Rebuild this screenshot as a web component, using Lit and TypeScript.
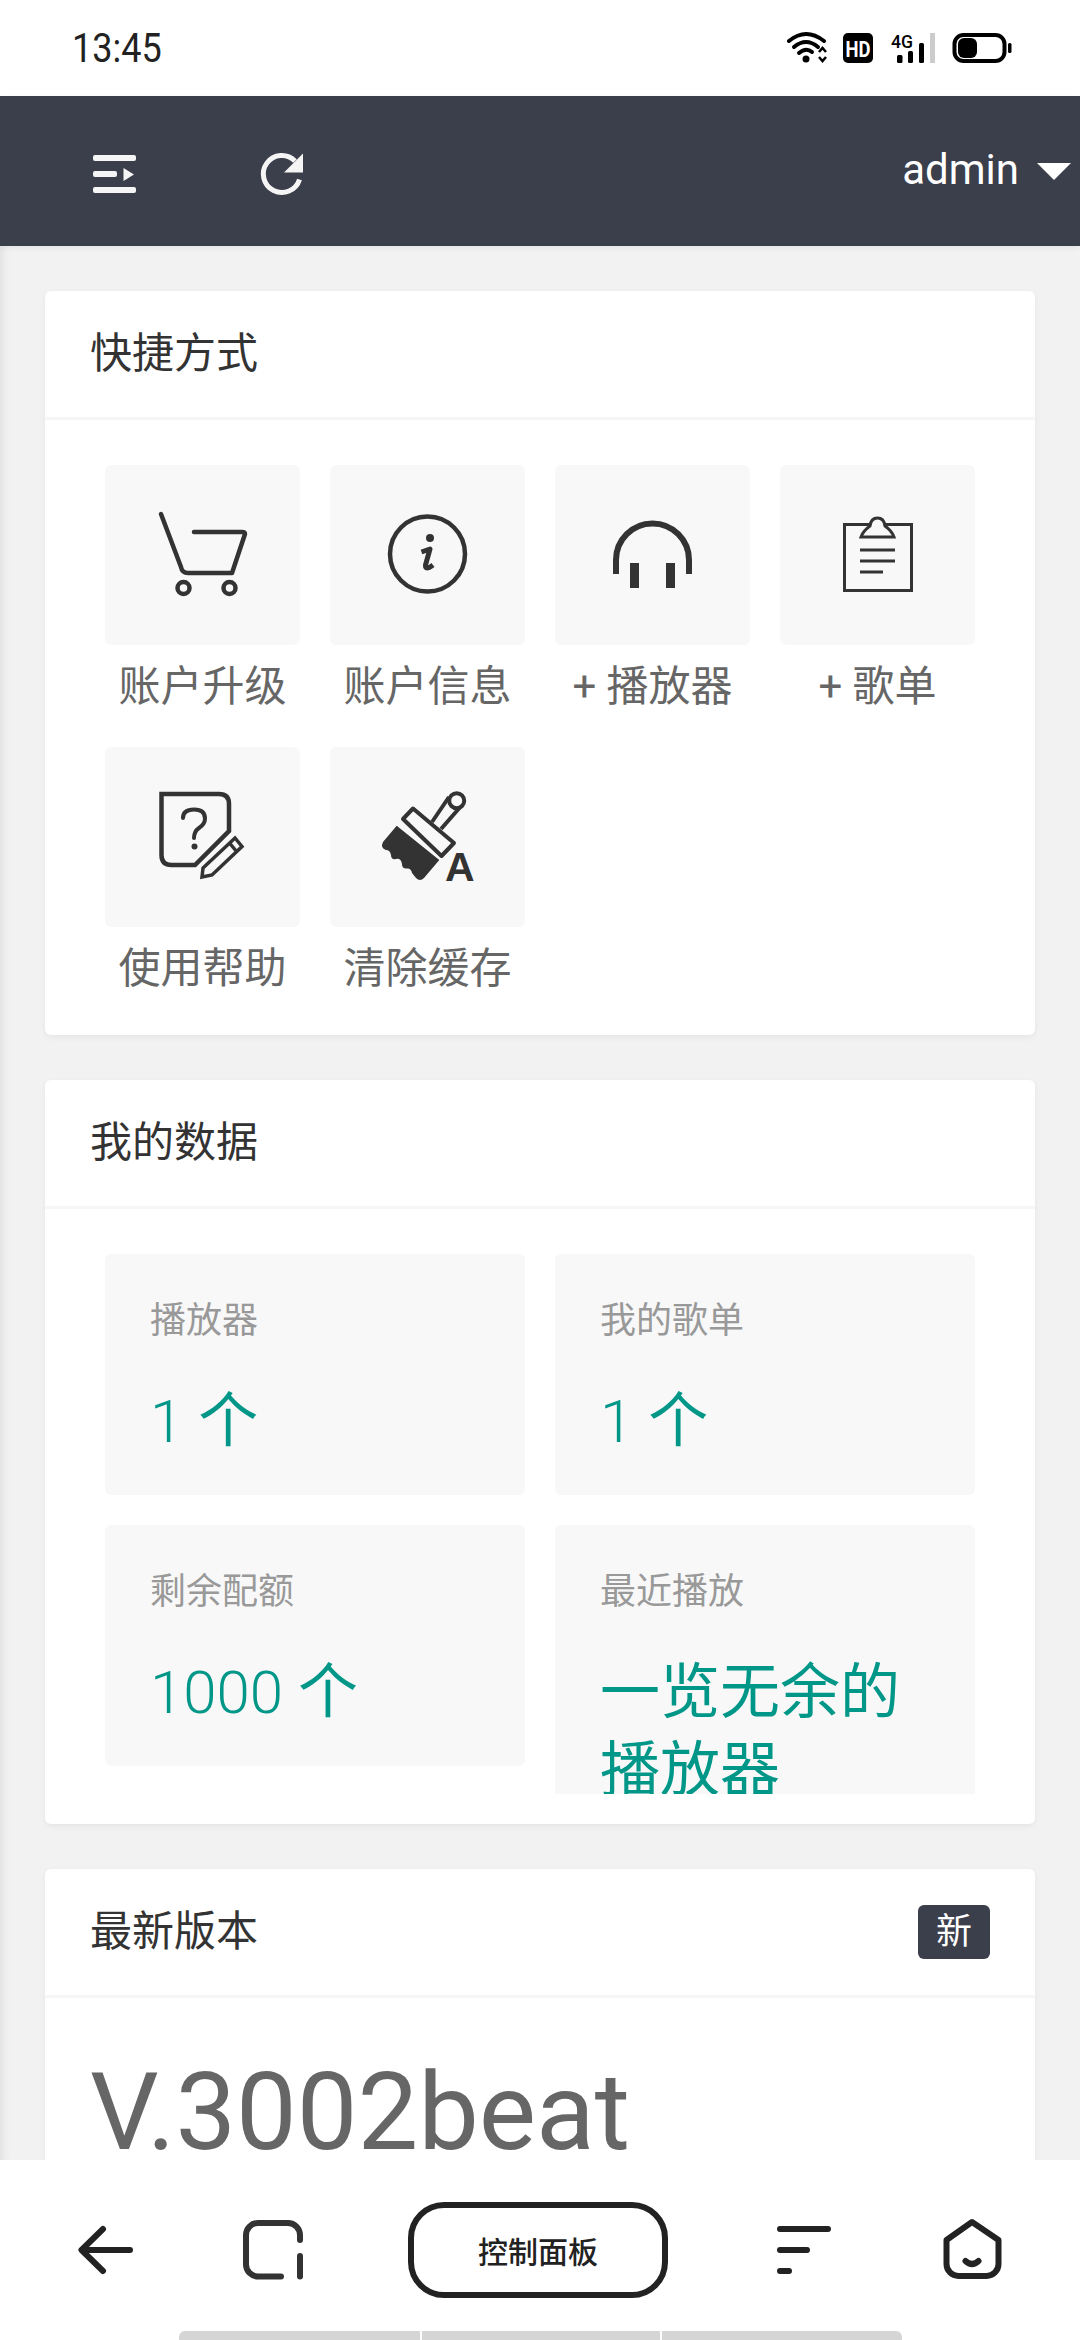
import { LitElement, html, css, svg } from "lit";
import { customElement } from "lit/decorators.js";

const INK = "#333";

const cart = svg`<g fill="none" stroke="${INK}" stroke-width="4.5" stroke-linecap="round" stroke-linejoin="round">
  <path d="M161 514 L181 567 Q182 573 188 573 L232 573 L245 534 Q245 532 242 532 L194 532"/>
  <circle cx="183.5" cy="588" r="6"/><circle cx="229.5" cy="588" r="6"/></g>`;
const info = svg`<circle cx="427.5" cy="554" r="37.5" fill="none" stroke="${INK}" stroke-width="4.5"/>
  <circle cx="430" cy="538" r="4" fill="${INK}"/>
  <path d="M421.5 552 L430 549 L425.5 565 Q425 571 433 565" fill="none" stroke="${INK}" stroke-width="5" stroke-linejoin="round"/>`;
const phones = svg`<path d="M616 574 V560 A36.5 36.5 0 0 1 689 560 V574" fill="none" stroke="${INK}" stroke-width="6"/>
  <rect x="630" y="563" width="9" height="25" fill="${INK}"/><rect x="666" y="563" width="9" height="25" fill="${INK}"/>`;
const clip = svg`<g fill="none" stroke="${INK}" stroke-width="3">
  <rect x="844.5" y="524.5" width="67" height="66"/>
  <path d="M861 537 Q863 531 870 526 Q871 518 877.5 518 Q884 518 885 526 Q892 531 894 537 Z" fill="#f8f8f8"/>
  <path d="M860 550 H895 M860 561 H895 M860 572 H883"/></g>`;
const help = svg`<g fill="none" stroke="${INK}" stroke-width="4.5" stroke-linejoin="miter">
  <path d="M161.5 794 H219 Q229 794 229 804 V831 L195 865 H171.5 Q161.5 865 161.5 855 Z"/>
  <path d="M183 818 Q183 809.5 194 809.5 Q205 809.5 205 818.5 Q205 824 199 828 Q194 831.5 194 838" stroke-width="4" stroke-linecap="round"/>
  <path d="M203 868 L235 838 L242 846.5 L212 875 L202 877 Z" stroke-width="3.5"/>
  <path d="M229.5 843 L237 852" stroke-width="3.5"/></g>
  <circle cx="194.5" cy="846.5" r="3" fill="${INK}"/>`;
const brush = svg`<g stroke="${INK}" stroke-linejoin="round">
  <path d="M432 822 L449 797 M441 829 L462 805" fill="none" stroke-width="4"/>
  <circle cx="456.7" cy="800.7" r="7.5" fill="#f8f8f8" stroke-width="4"/>
  <path d="M413 808.5 L454 843 L441.5 856 L403 819 Z" fill="#f8f8f8" stroke-width="4"/>
  <path d="M396.7 825.7 L439.3 860 L424 878 Q420 882 416 878 L412 873 Q411 868 407 868.5 Q402 869 402 864 Q401 858 396 859 Q391 860 391 855 Q390 850 386 850 Q380 848 383 842 Z" fill="${INK}" stroke="none"/></g>
  <text x="445" y="881" font-family="Liberation Sans, sans-serif" font-weight="700" font-size="41" fill="${INK}">A</text>`;

interface Quick { label: string; x: number; y: number; icon: unknown; }
const QUICK: Quick[] = [
  { label: "账户升级", x: 105, y: 465, icon: cart },
  { label: "账户信息", x: 330, y: 465, icon: info },
  { label: "+ 播放器", x: 555, y: 465, icon: phones },
  { label: "+ 歌单", x: 780, y: 465, icon: clip },
  { label: "使用帮助", x: 105, y: 747, icon: help },
  { label: "清除缓存", x: 330, y: 747, icon: brush },
];
const STATS = [
  { label: "播放器", num: "1", unit: " 个", tall: false },
  { label: "我的歌单", num: "1", unit: " 个", tall: false },
  { label: "剩余配额", num: "1000", unit: " 个", tall: false },
  { label: "最近播放", num: "", unit: "一览无余的播放器", tall: true },
];

@customElement("app-root")
export class AppRoot extends LitElement {
  static styles = css`
    :host {
      display: flex; flex-direction: column; width: 1080px; height: 2340px; overflow: hidden;
      background: #f2f2f2; color: #333;
      font-family: Roboto, "Noto Sans CJK SC", sans-serif;
    }
    svg { display: block; flex: none; }
    .status { flex: none; height: 96px; background: #fff; display: flex; align-items: center; justify-content: space-between; padding: 0 60px 0 72px; }
    .time { font-size: 40px; color: #222; transform: scaleX(.9); transform-origin: left center; line-height: 96px; margin-top: 2px; }
    .header { flex: none; height: 150px; background: #3b3e4b; display: flex; align-items: center; padding: 0 9px 0 88px; position: relative; z-index: 1; box-shadow: 0 2px 6px rgba(0,0,0,.06); }
    .h-refresh { margin-left: 112px; }
    .user { margin-left: auto; display: flex; align-items: center; color: #fff; font-size: 42px; line-height: 48px; margin-top: -2px; }
    .tri { width: 0; height: 0; border-left: 17.5px solid transparent; border-right: 17.5px solid transparent; border-top: 17px solid #fff; margin-left: 18px; margin-top: 2px; }
    .main { flex: 1; min-height: 0; overflow: hidden; display: flex; flex-direction: column; gap: 45px; padding: 45px; box-shadow: inset 10px 0 10px -8px rgba(0,0,0,.09); }
    .card { flex: none; background: #fff; border-radius: 6px; box-shadow: 0 2px 6px rgba(0,0,0,.06); }
    .card-head { height: 126px; border-bottom: 3px solid #f6f6f6; display: flex; align-items: center; justify-content: space-between; padding: 0 45px; font-size: 42px; line-height: 126px; color: #333; }
    .badge { background: #3b3e4b; color: #fff; border-radius: 6px; height: 54px; line-height: 54px; padding: 0 18px; font-size: 36px; }
    .quick { display: grid; grid-template-columns: repeat(4, 195px); gap: 30px; padding: 45px 60px 36px; }
    .tile { height: 180px; background: #f8f8f8; border-radius: 6px; }
    .tile svg { width: 195px; height: 180px; }
    .q-label { height: 72px; line-height: 72px; margin-top: 6px; margin-bottom: -6px; text-align: center; font-size: 42px; color: #666; }
    .stats { display: grid; grid-template-columns: repeat(2, 420px); gap: 30px; align-items: start; padding: 45px 60px 30px; }
    .stat { height: 241px; box-sizing: border-box; padding: 40px 45px 0; background: #f8f8f8; border-radius: 6px; overflow: hidden; }
    .stat.tall { height: 269px; border-radius: 6px 6px 0 0; }
    .stat-label { font-size: 36px; line-height: 54px; color: #999; margin-bottom: 35px; }
    .stat-value { font-size: 60px; line-height: 78px; color: #009688; }
    .num { font-weight: 300; }
    .version { padding: 33px 45px; font-size: 108px; line-height: 162px; color: #666; }
    .nav { flex: none; height: 180px; background: #fff; position: relative; z-index: 2; display: flex; flex-direction: column; }
    .nav-row { display: grid; grid-template-columns: 168px 170px 362px 167px 70px; align-items: center; height: 96px; margin-top: 42px; padding-left: 70px; }
    .nav-btn { width: 260px; height: 96px; box-sizing: border-box; border: 6px solid #222; border-radius: 36px; display: flex; align-items: center; justify-content: center; font-size: 30px; font-weight: 500; color: #222; }
    .gesture { margin: 33px auto 0; width: 723px; height: 9px; display: grid; grid-template-columns: 241px 238px 1fr; column-gap: 2px; }
    .gesture i { background: #d5d5d5; }
    .gesture i:first-child { border-radius: 6px 0 0 0; }
    .gesture i:last-child { border-radius: 0 6px 0 0; }
  `;

  private statusIcons() {
    return html`<svg width="240" height="46" viewBox="780 25 240 46">
      <g fill="none" stroke="#000" stroke-width="4" stroke-linecap="round">
        <path d="M789 41 Q806 27 824 41"/><path d="M794 47 Q806 37 818 47"/><path d="M799 53 Q806 47 812 52"/>
      </g>
      <circle cx="806" cy="59" r="3.5" fill="#000"/>
      <path d="M819 52 L822.5 48 L826 52 M819 57 L822.5 61 L826 57" fill="none" stroke="#000" stroke-width="2.5"/>
      <rect x="843" y="33" width="30" height="30" rx="5" fill="#000"/>
      <text x="858" y="56.5" text-anchor="middle" font-family="Roboto, sans-serif" font-weight="700" font-size="22" fill="#fff" textLength="25" lengthAdjust="spacingAndGlyphs">HD</text>
      <text x="891" y="48" font-family="Roboto, sans-serif" font-weight="500" font-size="19" fill="#000" textLength="22" lengthAdjust="spacingAndGlyphs">4G</text>
      <rect x="897" y="55" width="5.5" height="8" rx="1.5"/><rect x="908" y="51" width="5" height="12" rx="1.5"/><rect x="919" y="43" width="5" height="20" rx="1.5"/>
      <rect x="930" y="33" width="5" height="30" fill="#ccc"/>
      <rect x="954.5" y="35" width="50" height="26" rx="9" fill="none" stroke="#000" stroke-width="4"/>
      <rect x="958" y="38" width="19" height="20" rx="6" fill="#000"/>
      <rect x="1008" y="43" width="3.5" height="10" rx="1.5" fill="#000"/>
    </svg>`;
  }

  private quickItem(q: Quick) {
    return html`<div>
      <div class="tile"><svg viewBox="${q.x} ${q.y} 195 180">${q.icon}</svg></div>
      <div class="q-label">${q.label}</div>
    </div>`;
  }

  render() {
    return html`
      <div class="status"><span class="time">13:45</span>${this.statusIcons()}</div>
      <div class="header">
        <svg width="55" height="50" viewBox="88 146 55 50" fill="#f5f5f5">
          <rect x="93" y="155" width="43" height="6" rx="2"/><rect x="93" y="171" width="24" height="6" rx="2"/>
          <path d="M123.5 168 L134 174.5 L123.5 181 Z"/><rect x="93" y="187" width="43" height="6" rx="2"/>
        </svg>
        <svg class="h-refresh" width="55" height="55" viewBox="255 143.5 55 55">
          <path d="M299.5 179 A18.5 18.5 0 1 1 295 160.5" fill="none" stroke="#f5f5f5" stroke-width="5"/>
          <path d="M303 153 V172 H284 Z" fill="#f5f5f5"/>
        </svg>
        <div class="user">admin<span class="tri"></span></div>
      </div>
      <div class="main">
        <section class="card">
          <div class="card-head">快捷方式</div>
          <div class="quick">${QUICK.map((q) => this.quickItem(q))}</div>
        </section>
        <section class="card">
          <div class="card-head">我的数据</div>
          <div class="stats">${STATS.map((s) => html`<div class="stat ${s.tall ? "tall" : ""}">
            <div class="stat-label">${s.label}</div><div class="stat-value"><span class="num">${s.num}</span>${s.unit}</div></div>`)}</div>
        </section>
        <section class="card">
          <div class="card-head">最新版本<span class="badge">新</span></div>
          <div class="version">V.3002beat</div>
        </section>
      </div>
      <div class="nav">
        <div class="nav-row">
          <svg width="70" height="70" viewBox="70 2215 70 70" fill="none" stroke="#222" stroke-width="6" stroke-linecap="round" stroke-linejoin="round"><path d="M103 2229 L81.5 2250 L103 2271 M82 2250 H130"/></svg>
          <svg width="70" height="70" viewBox="238 2215 70 70" fill="none" stroke="#333" stroke-width="6" stroke-linecap="round"><path d="M300 2240 V2235 A12 12 0 0 0 288 2223 H258 A12 12 0 0 0 246 2235 V2264.5 A12 12 0 0 0 258 2276.5 H281 M300 2256 V2276.5"/></svg>
          <div class="nav-btn">控制面板</div>
          <svg width="70" height="70" viewBox="770 2215 70 70" fill="none" stroke="#222" stroke-width="6" stroke-linecap="round"><path d="M780 2229 H828 M780 2250 H807 M780 2271 H789"/></svg>
          <svg width="70" height="70" viewBox="937 2215 70 70" fill="none" stroke="#222" stroke-width="6" stroke-linecap="round" stroke-linejoin="round"><path d="M972 2222 L946.5 2240 V2264 A12 12 0 0 0 958.5 2276 H986.5 A12 12 0 0 0 998.5 2264 V2240 Z M965.5 2261 Q972 2267 978.5 2261"/></svg>
        </div>
        <div class="gesture"><i></i><i></i><i></i></div>
      </div>
    `;
  }
}
